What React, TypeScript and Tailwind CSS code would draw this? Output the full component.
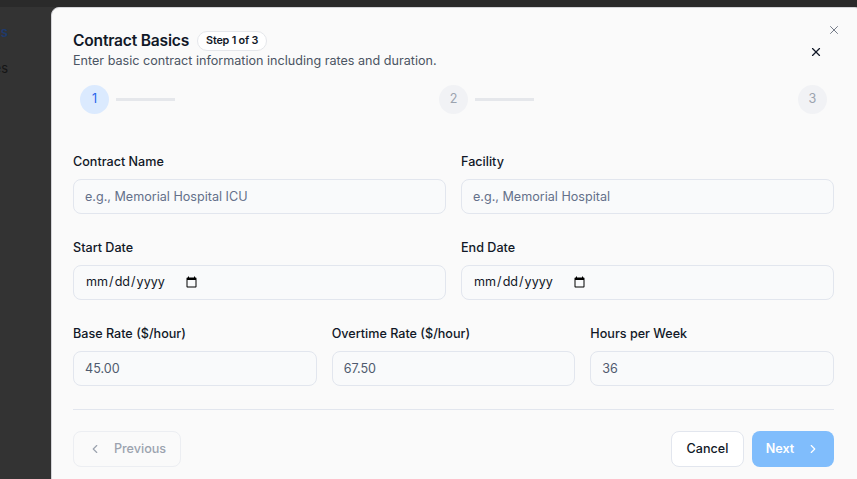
import React from 'react';
import { X, ChevronLeft, ChevronRight } from 'lucide-react';

const font = { fontFamily: 'Inter, "Noto Sans", sans-serif' };

function Field({ label, placeholder, value, type = 'text' }: { label: string; placeholder?: string; value?: string; type?: string }) {
  return (
    <div className="flex flex-col gap-[8px] min-w-0">
      <label className="text-[12.6px] font-medium text-[#111827] leading-[18px]">{label}</label>
      {type === 'date' ? (
        <div className="h-[35px] w-full rounded-lg border border-[#e2e6ee] bg-[#f9fafb] px-[11px] flex items-center">
          <input type="date" className="bg-transparent text-[12.6px] text-[#111827] outline-none" style={font} />
        </div>
      ) : (
        <input
          type={type}
          placeholder={placeholder}
          defaultValue={value}
          className="h-[35px] w-full rounded-lg border border-[#e2e6ee] bg-[#f9fafb] px-[11px] text-[12.6px] text-[#4f5a6e] placeholder:text-[#64708a] outline-none"
          style={font}
        />
      )}
    </div>
  );
}

function Step({ n, active, line }: { n: number; active?: boolean; line?: boolean }) {
  return (
    <div className="flex items-center gap-[7px]">
      <div
        className={`w-[29px] h-[29px] rounded-full flex items-center justify-center text-[12.6px] ${
          active ? 'bg-[#dbeafe] text-[#2563eb]' : 'bg-[#f1f2f5] text-[#9ca3af]'
        }`}
      >
        {n}
      </div>
      {line && <div className="w-[59px] h-[3px] bg-[#e5e7eb]" />}
    </div>
  );
}

export default function App() {
  return (
    <div className="relative w-[857px] h-[479px] overflow-hidden bg-[#333333]" style={font}>
      {/* page behind the overlay */}
      <div className="absolute left-0 top-0 w-full h-[7px] bg-[#2a2a2a]" />
      <div className="absolute right-[849px] top-[23px] text-[13px] font-semibold text-[#1e3a6e] whitespace-nowrap">Contracts</div>
      <div className="absolute right-[849px] top-[59px] text-[13px] text-[#151515] whitespace-nowrap">Facilities</div>

      {/* modal */}
      <div className="absolute left-[51px] top-[7px] w-[812px] h-[520px] rounded-lg bg-[#fafafa] border border-[#d4d4d8] pl-[21px] pt-[22px]">
        <button className="absolute right-[21px] top-[15px] text-[#6b7280]">
          <X size={14} strokeWidth={1.6} />
        </button>
        <button className="absolute right-[39px] top-[37px] text-[#111827]">
          <X size={14} strokeWidth={2} />
        </button>

        <div className="flex items-center gap-2">
          <h2 className="text-[15.6px] font-semibold text-[#111827] leading-[22px] tracking-[-0.2px]">Contract Basics</h2>
          <span className="rounded-full border border-[#e5e7eb] bg-white px-[8px] py-[2px] text-[10.8px] leading-[14px] font-semibold text-[#111827] tracking-[-0.2px]">
            Step 1 of 3
          </span>
        </div>
        <p className="text-[12.6px] text-[#4b5563] leading-[16px] mt-[1px]">Enter basic contract information including rates and duration.</p>

        <div className="w-[761px] flex items-center justify-between px-[7px] mt-[16px]">
          <Step n={1} active line />
          <Step n={2} line />
          <Step n={3} />
        </div>

        <div className="mt-[39px] flex flex-col gap-[25px] w-[761px]">
          <div className="grid grid-cols-2 gap-[15px]">
            <Field label="Contract Name" placeholder="e.g., Memorial Hospital ICU" />
            <Field label="Facility" placeholder="e.g., Memorial Hospital" />
          </div>
          <div className="grid grid-cols-2 gap-[15px]">
            <Field label="Start Date" type="date" />
            <Field label="End Date" type="date" />
          </div>
          <div className="grid grid-cols-3 gap-[15px]">
            <Field label="Base Rate ($/hour)" value="45.00" />
            <Field label="Overtime Rate ($/hour)" value="67.50" />
            <Field label="Hours per Week" value="36" />
          </div>
        </div>

        <div className="w-[761px] h-px bg-[#e2e6ee] mt-[23px]" />

        <div className="w-[761px] flex items-center justify-between mt-[21px]">
          <button className="h-[36px] w-[108px] rounded-lg border border-[#eceef2] flex items-center justify-center gap-[12px] text-[12.6px] font-medium text-[#9ca3af]">
            <ChevronLeft size={14} />
            Previous
          </button>
          <div className="flex items-center gap-2">
            <button className="h-[36px] w-[73px] rounded-lg border border-[#e2e6ee] bg-white text-[12.6px] font-medium text-[#111827]">
              Cancel
            </button>
            <button className="h-[36px] w-[82px] rounded-lg bg-[#80bdfc] flex items-center justify-center gap-[12px] text-[12.6px] font-semibold text-white">
              Next
              <ChevronRight size={14} />
            </button>
          </div>
        </div>
      </div>
    </div>
  );
}
